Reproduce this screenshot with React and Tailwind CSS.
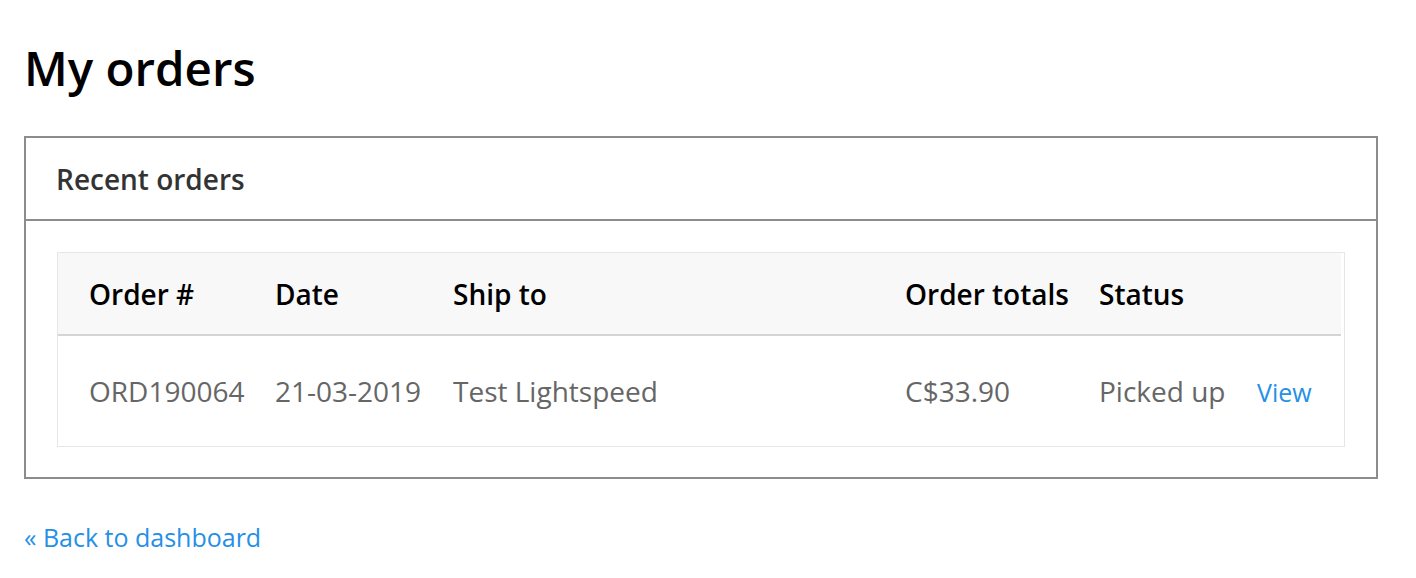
export default function App() {
  const font = { fontFamily: '"Open Sans", "Noto Sans", sans-serif' };
  return (
    <div className="w-[1416px] h-[578px] bg-white pl-6 pr-[38px] pt-[40px]" style={font}>
      <h1 className="text-[47.5px] leading-[55px] font-semibold text-black">My orders</h1>
      <div className="mt-[41px] border-2 border-[#8c8c8c]">
        <div className="h-[83px] flex items-center px-[30px] border-b-2 border-[#8c8c8c]">
          <span className="text-[28px] font-semibold text-[#333]">Recent orders</span>
        </div>
        <div className="px-[31px] pt-[31px] pb-[30px]">
          <div className="border border-[#e6e6e6]">
            <div className="mr-[3px] bg-[#f8f8f8] border-b-2 border-[#d4d4d4] h-[83px] pl-[31px] grid grid-cols-[186px_178px_452px_194px_158px_1fr] items-center text-[28px] font-semibold text-black">
              <span>Order #</span>
              <span>Date</span>
              <span>Ship to</span>
              <span>Order totals</span>
              <span>Status</span>
              <span></span>
            </div>
            <div className="h-[110px] pl-[31px] grid grid-cols-[186px_178px_452px_194px_158px_1fr] items-center text-[28px] text-[#666]">
              <span>ORD190064</span>
              <span>21-03-2019</span>
              <span>Test Lightspeed</span>
              <span>C$33.90</span>
              <span>Picked up</span>
              <span className="pt-[3px] text-[25px] text-[#2590e6]">View</span>
            </div>
          </div>
        </div>
      </div>
      <div className="mt-[40px] text-[25px] text-[#2590e6]">« Back to dashboard</div>
    </div>
  );
}
